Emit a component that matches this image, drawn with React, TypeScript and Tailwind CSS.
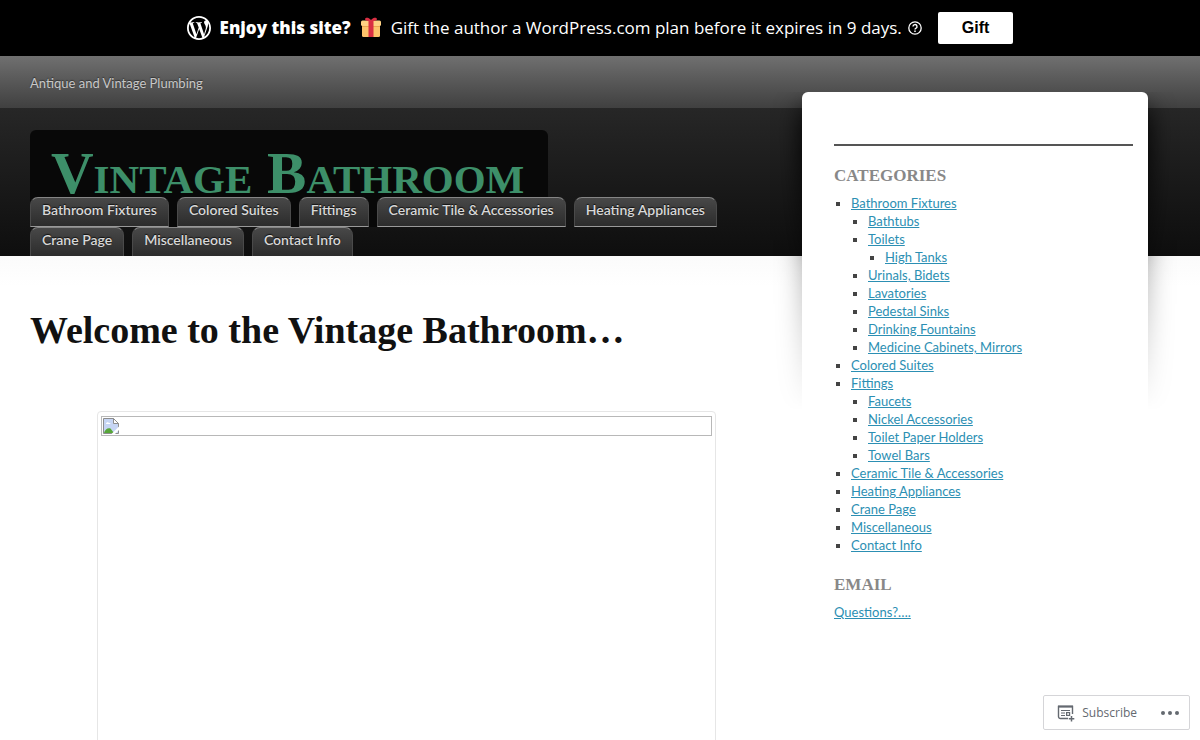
import React from "react";

type Category = { name: string; children?: Category[] };

const navItems = [
  "Bathroom Fixtures",
  "Colored Suites",
  "Fittings",
  "Ceramic Tile & Accessories",
  "Heating Appliances",
  "Crane Page",
  "Miscellaneous",
  "Contact Info",
];

const categories: Category[] = [
  {
    name: "Bathroom Fixtures",
    children: [
      { name: "Bathtubs" },
      { name: "Toilets", children: [{ name: "High Tanks" }] },
      { name: "Urinals, Bidets" },
      { name: "Lavatories" },
      { name: "Pedestal Sinks" },
      { name: "Drinking Fountains" },
      { name: "Medicine Cabinets, Mirrors" },
    ],
  },
  { name: "Colored Suites" },
  {
    name: "Fittings",
    children: [
      { name: "Faucets" },
      { name: "Nickel Accessories" },
      { name: "Toilet Paper Holders" },
      { name: "Towel Bars" },
    ],
  },
  { name: "Ceramic Tile & Accessories" },
  { name: "Heating Appliances" },
  { name: "Crane Page" },
  { name: "Miscellaneous" },
  { name: "Contact Info" },
];

const WordPressIcon = () => (
  <svg viewBox="2 2 20 20" className="w-6 h-6 shrink-0" fill="currentColor" aria-hidden="true">
    <path
      fillRule="evenodd"
      d="M12 2C6.477 2 2 6.477 2 12s4.477 10 10 10 10-4.477 10-10S17.523 2 12 2zM3.500 12c0-1.232.264-2.402.736-3.459L8.291 19.650C5.456 18.272 3.500 15.365 3.500 12zm8.500 8.501c-.834 0-1.640-.123-2.400-.345l2.550-7.411 2.613 7.157c.017.042.038.080.061.117-.884.310-1.833.482-2.824.482zm1.172-12.486c.512-.027.973-.081.973-.081.458-.054.404-.727-.054-.701 0 0-1.377.108-2.265.108-.835 0-2.239-.108-2.239-.108-.459-.026-.512.674-.054.701 0 0 .434.054.892.081l1.324 3.629-1.860 5.579-3.096-9.208c.512-.027.973-.081.973-.081.458-.054.403-.727-.055-.701 0 0-1.376.108-2.265.108-.159 0-.347-.004-.547-.010C6.418 5.025 9.030 3.500 12 3.500c2.213 0 4.228.846 5.740 2.232-.037-.002-.072-.007-.111-.007-.835 0-1.427.727-1.427 1.509 0 .701.404 1.293.835 1.994.323.566.701 1.293.701 2.344 0 .727-.280 1.572-.647 2.748l-.848 2.833-3.071-9.138zm3.101 11.332l2.596-7.506c.485-1.213.646-2.182.646-3.045 0-.313-.021-.603-.057-.874.664 1.210 1.042 2.600 1.042 4.078 0 3.136-1.700 5.874-4.227 7.347z"
    />
  </svg>
);

const GiftIcon = () => (
  <svg viewBox="0 0 22 22" className="w-[22px] h-[22px] shrink-0" aria-hidden="true">
    <rect x="2" y="8" width="18" height="12" rx="1.500" fill="#fdc36b" />
    <rect x="1" y="3.500" width="20" height="5.500" rx="1.500" fill="#ffd183" />
    <path d="M2 9h18v1H2z" fill="#e9a550" />
    <rect x="8.500" y="3.500" width="5" height="16.500" fill="#d92f43" />
    <path d="M11 4C7.500 4 5 3.500 5 2.200S8-.3 11 3c3-3.300 6-2.100 6-.8S14.500 4 11 4z" fill="#d92f43" />
  </svg>
);

const HelpIcon = () => (
  <svg viewBox="0 0 16 16" className="-ml-1 w-4 h-4 shrink-0" fill="none" stroke="currentColor" aria-hidden="true">
    <circle cx="8" cy="8" r="6.200" strokeWidth="1.300" />
    <path d="M6 6.600a2 2 0 1 1 2.800 1.800c-.6.300-.8.600-.8 1.200" strokeWidth="1.400" />
    <path d="M8 10.500v1.400" strokeWidth="1.500" />
  </svg>
);

const SubscribeIcon = () => (
  <svg viewBox="0 0 18 18" className="w-[18px] h-[18px]" fill="none" stroke="currentColor" aria-hidden="true">
    <path d="M11 14.500H3.500A2 2 0 0 1 1.500 12.500V2.500h14V10" strokeWidth="1.400" />
    <path d="M1 2.500h15" strokeWidth="2" />
    <path d="M4 6.500h9M4 9h4M4 11.500h4" strokeWidth="1.200" />
    <rect x="9.600" y="8.600" width="3" height="2.800" strokeWidth="1.200" />
    <path d="M14.500 12v5.500M11.800 14.700h5.500" strokeWidth="1.500" />
  </svg>
);

const BrokenImageIcon = () => (
  <svg viewBox="0 0 16 16" className="w-4 h-4" aria-hidden="true">
    <path d="M.5.500h10l5 5v10H.5z" fill="#c6d5f4" stroke="#8d8d8d" />
    <path d="M3 6c0-2 2.500-2 3-1 1.500-.5 2 1 1 1z" fill="#fff" />
    <path d="M1 15c1-4 4-5.500 6.500-4.500L11 15z" fill="#57a639" />
    <path d="M10.500.500v5h5z" fill="#fff" stroke="#8d8d8d" />
    <path d="M16 8.500 8.500 16H12l4-4z" fill="#fff" />
  </svg>
);

const CategoryList = ({ items }: { items: Category[] }) => (
  <ul className="list-[square] pl-[17px] marker:text-[#444]">
    {items.map((item) => (
      <li key={item.name}>
        <a href="#" className="text-[#2c8fb3] underline">
          {item.name}
        </a>
        {item.children && <CategoryList items={item.children} />}
      </li>
    ))}
  </ul>
);

const WidgetTitle = ({ children }: { children: React.ReactNode }) => (
  <h3 className="mt-5 mb-2 text-[17px] leading-5 font-bold text-[#888] font-['Liberation_Serif',serif]">{children}</h3>
);

const GiftBanner = () => (
  <div className="flex min-h-14 items-center justify-center gap-[9px] bg-black px-4 text-[17px] text-white font-['Open_Sans','Noto_Sans',sans-serif]">
    <WordPressIcon />
    <strong className="font-extrabold">Enjoy this site?</strong>
    <GiftIcon />
    <span>Gift the author a WordPress.com plan before it expires in 9 days.</span>
    <HelpIcon />
    <button className="ml-1.5 h-8 rounded-xs bg-white px-6 text-base font-bold text-black font-['Liberation_Sans',sans-serif]">
      Gift
    </button>
  </div>
);

const Header = () => (
  <header className="col-span-full row-start-1 -mb-px bg-linear-to-b from-[#303030] to-[#0e0e0e]">
    <div className="flex h-[52px] items-center bg-linear-to-b from-[#707070] to-[#404040] px-[30px] pt-1">
      <p className="text-[13px] text-[#c8c8c8] text-shadow-[0_-1px_1px_#333]">Antique and Vintage Plumbing</p>
    </div>
    <div className="mr-[398px] pl-[30px] pt-[22px]">
      <h1 className="h-[97px] w-fit rounded-md bg-[#080808] pt-2 pr-6 pl-[21px] font-['Liberation_Serif',serif]">
        <a href="#" className="block text-[59px] leading-[70px] font-bold text-[#3d8f69] [font-variant:small-caps]">
          Vintage Bathroom
        </a>
      </h1>
      <nav className="relative -mt-[30px]">
        <ul className="flex flex-wrap gap-x-2">
          {navItems.map((item) => (
            <li key={item}>
              <a
                href="#"
                className="block h-[30px] rounded-t-lg border border-[#4a4a4a] border-t-[#858585] border-b-[#999] bg-linear-to-b from-[#484848] to-[#2c2c2c] px-[11px] text-sm leading-6 font-semibold text-[#d8d8d8] text-shadow-[0_-1px_1px_#111]"
              >
                {item}
              </a>
            </li>
          ))}
        </ul>
      </nav>
    </div>
  </header>
);

const Sidebar = () => (
  <aside className="relative col-start-2 row-span-2 row-start-1 mt-9 mr-[52px]">
    {/* side shadow that fades out down the card */}
    <div className="absolute -inset-x-8 top-0 h-80 mask-[linear-gradient(#000_20%,#0005_55%,transparent)]">
      <div className="absolute inset-x-8 top-3 h-96 shadow-[0_4px_24px_#000]" />
    </div>
    <div className="relative h-full rounded-t-md bg-white pt-[52px] pr-[15px] pl-8 text-[13px] leading-[18px] text-[#555]">
      <hr className="border-t-2 border-[#555]" />
      <WidgetTitle>CATEGORIES</WidgetTitle>
      <div className="pb-px">
        <CategoryList items={categories} />
      </div>
      <WidgetTitle>EMAIL</WidgetTitle>
      <a href="#" className="text-[#2c8fb3] underline">
        Questions?….
      </a>
    </div>
  </aside>
);

const App = () => {
  return (
    <div className="flex h-screen flex-col overflow-hidden bg-white font-['Lato','Open_Sans',sans-serif]">
      <GiftBanner />
      <div className="grid flex-1 grid-cols-[minmax(0,1fr)_398px] grid-rows-[auto_1fr]">
        <Header />
        <main className="relative col-span-full row-start-2 flex flex-col bg-[linear-gradient(#fbfbfb,#fff_30px)] bg-white pr-[484px] pl-[30px]">
          <h2 className="mt-[49px] text-[38px] leading-[50px] font-bold text-[#111] font-['Liberation_Serif',serif]">
            Welcome to the Vintage Bathroom…
          </h2>
          <figure className="mt-14 -mb-2 ml-[67px] flex-1 rounded border border-[#e6e6e6] px-[3px] pt-1">
            <div className="h-5 border border-[#b8b8b8] p-px" role="img" aria-label="Vintage bathroom">
              <BrokenImageIcon />
            </div>
          </figure>
        </main>
        <Sidebar />
      </div>
      <div className="fixed right-[10px] bottom-[10px] flex h-[35px] items-center rounded-xs border border-[#d5d5d8] bg-white pr-[10px] pl-[13px] text-[#646970] font-['Open_Sans',sans-serif]">
        <button className="flex items-center gap-[7px] text-xs">
          <SubscribeIcon />
          Subscribe
        </button>
        <button className="ml-6 flex gap-[3px]" aria-label="More options">
          <span className="size-1 rounded-full bg-current" />
          <span className="size-1 rounded-full bg-current" />
          <span className="size-1 rounded-full bg-current" />
        </button>
      </div>
    </div>
  );
};

export default App;
